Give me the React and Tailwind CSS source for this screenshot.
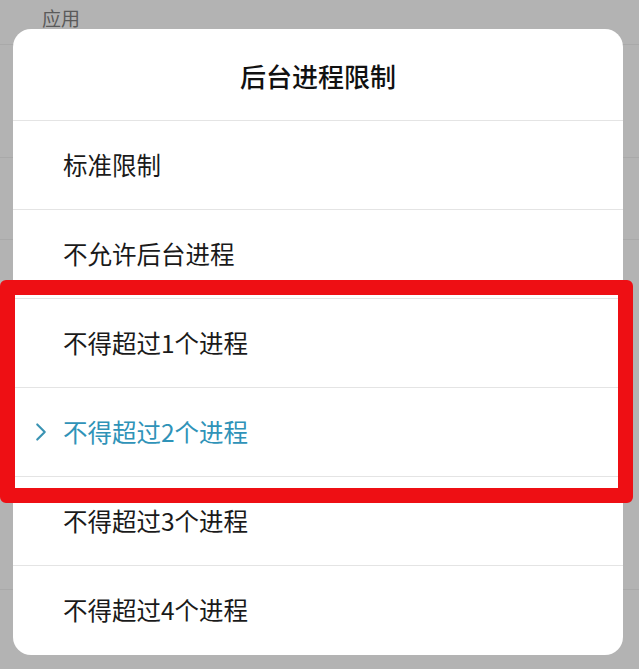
import { ChevronRight } from 'lucide-react';

const options = [
  '标准限制',
  '不允许后台进程',
  '不得超过1个进程',
  '不得超过2个进程',
  '不得超过3个进程',
  '不得超过4个进程',
];

const selected = 3;

export default function App() {
  return (
    <div
      className="relative w-[639px] h-[669px] overflow-hidden bg-[#b3b3b3]"
      style={{ fontFamily: '"Noto Sans CJK SC", "Noto Sans", sans-serif' }}
    >
      {/* page behind the dialog */}
      <div className="flex flex-col">
        <div className="h-[45px] pl-[42px] flex items-center border-b border-[#a9a9a9]">
          <span className="text-[19px] leading-none text-[#5a5a5a] -mt-[10px]">应用</span>
        </div>
        <div className="h-[113px] border-b border-[#a9a9a9]" />
        <div className="h-[82px] border-b border-[#a9a9a9]" />
        <div className="h-[350px] border-b border-[#a9a9a9]" />
      </div>

      {/* dialog */}
      <div className="absolute left-[13px] top-[29px] w-[610px] bg-white rounded-[18px] overflow-hidden">
        <div className="h-[92px] flex items-center justify-center border-b border-[#e4e4e4]">
          <h2 className="text-[26px] leading-none font-medium text-[#111] mt-[3px]">后台进程限制</h2>
        </div>
        {options.map((label, i) => (
          <div
            key={label}
            className={`relative h-[89px] flex items-center pl-[50px] ${
              i < options.length - 1 ? 'border-b border-[#e4e4e4]' : ''
            }`}
          >
            {i === selected && (
              <ChevronRight
                className="absolute left-[13px] top-1/2 -translate-y-1/2 text-[#3a93b3]"
                size={30}
                strokeWidth={1.7}
              />
            )}
            <span
              className={`text-[24.5px] leading-none ${
                i === selected ? 'text-[#2f93b8]' : 'text-[#1a1a1a]'
              }`}
            >
              {label}
            </span>
          </div>
        ))}
      </div>

      {/* red highlight */}
      <div className="absolute left-0 top-[280px] w-[633px] h-[223px] border-[15px] border-[#ee0f14] rounded-[6px]" />
    </div>
  );
}
